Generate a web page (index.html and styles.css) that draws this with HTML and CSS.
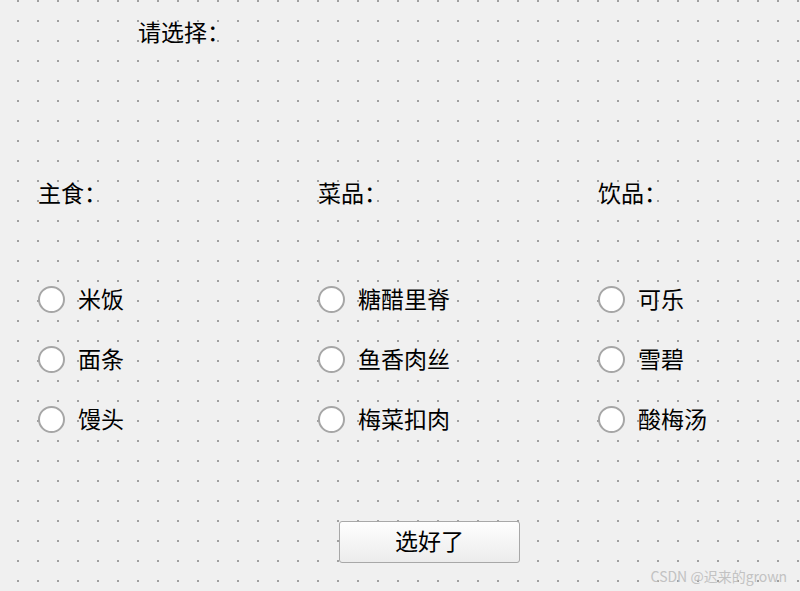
FILE: index.html
```html
<!DOCTYPE html>
<html lang="zh">
<head>
<meta charset="utf-8">
<link rel="stylesheet" href="styles.css">
</head>
<body>
<div class="form">
  <div class="title">请选择：</div>
  <div class="columns">
    <div class="col">
      <div class="label">主食：</div>
      <div class="options">
        <div class="radio"><span class="circle"></span><span class="txt">米饭</span></div>
        <div class="radio"><span class="circle"></span><span class="txt">面条</span></div>
        <div class="radio"><span class="circle"></span><span class="txt">馒头</span></div>
      </div>
    </div>
    <div class="col">
      <div class="label">菜品：</div>
      <div class="options">
        <div class="radio"><span class="circle"></span><span class="txt">糖醋里脊</span></div>
        <div class="radio"><span class="circle"></span><span class="txt">鱼香肉丝</span></div>
        <div class="radio"><span class="circle"></span><span class="txt">梅菜扣肉</span></div>
      </div>
    </div>
    <div class="col">
      <div class="label">饮品：</div>
      <div class="options">
        <div class="radio"><span class="circle"></span><span class="txt">可乐</span></div>
        <div class="radio"><span class="circle"></span><span class="txt">雪碧</span></div>
        <div class="radio"><span class="circle"></span><span class="txt">酸梅汤</span></div>
      </div>
    </div>
  </div>
  <div class="actions"><button class="btn">选好了</button></div>
  <div class="watermark">CSDN @迟来的grown</div>
</div>
</body>
</html>
```
FILE: styles.css
```css
html, body {
  margin: 0;
  padding: 0;
}
body {
  width: 800px;
  height: 591px;
  overflow: hidden;
  font-family: "Noto Sans CJK SC", "Noto Sans", sans-serif;
  color: #000;
  background-color: #f0f0f0;
  background-image:
    linear-gradient(to right, #f0f0f0 18px, transparent 18px),
    linear-gradient(to bottom, #f0f0f0 18px, #a0a0a0 18px);
  background-size: 20px 20px;
  background-position: -1px -18px;
}
.form {
  position: relative;
  height: 591px;
}
.title {
  padding: 19px 0 0 138px;
  font-size: 23px;
  line-height: 24px;
  height: 24px;
}
.columns {
  margin-top: 137px;
  padding-left: 38px;
  display: grid;
  grid-template-columns: 280px 280px 1fr;
}
.label {
  font-size: 23px;
  line-height: 24px;
  height: 24px;
}
.options {
  margin-top: 75px;
  display: flex;
  flex-direction: column;
  gap: 20px;
}
.radio {
  display: flex;
  align-items: center;
  height: 40px;
}
.circle {
  width: 23px;
  height: 23px;
  border: 2px solid #a6a6a6;
  border-radius: 50%;
  background: #fff;
  flex: none;
}
.txt {
  margin-left: 13px;
  font-size: 23px;
  line-height: 24px;
  padding-bottom: 3px;
}
.actions {
  margin-top: 82px;
  padding-left: 339px;
}
.btn {
  width: 181px;
  height: 42px;
  border: 1px solid #a8a8a8;
  border-radius: 3px;
  background: linear-gradient(to bottom, #fefefe, #ececec);
  font-family: "Noto Sans CJK SC", "Noto Sans", sans-serif;
  font-size: 23px;
  color: #000;
  padding: 0 0 4px 0;
  line-height: 24px;
}
.watermark {
  position: absolute;
  right: 13px;
  bottom: 7px;
  font-size: 14px;
  line-height: 16px;
  color: #c2c2c2;
}
```
